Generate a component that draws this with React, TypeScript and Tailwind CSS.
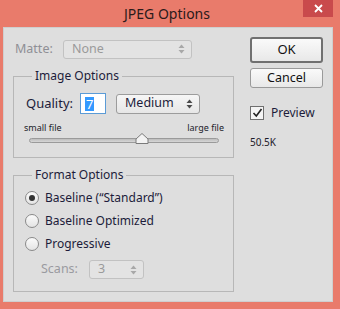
import type { ReactNode } from 'react';

const font = { fontFamily: '"Noto Sans", "Open Sans", sans-serif' };

function Arrows({ muted }: { muted?: boolean }) {
  const c = muted ? '#a8a8a8' : '#4a4a4a';
  return (
    <svg width="7" height="10" viewBox="0 0 7 10" className="shrink-0">
      <path d="M3.5 0.5 L6.5 4 L0.5 4 Z" fill={c} />
      <path d="M3.5 9.5 L6.5 6 L0.5 6 Z" fill={c} />
    </svg>
  );
}

function Select({ value, muted, className }: { value: string; muted?: boolean; className: string }) {
  return (
    <div
      className={`flex items-center justify-between rounded-[3px] border pl-[8px] pr-[6px] ${
        muted
          ? 'border-[#c2c2c2] bg-[#e3e3e3] text-[#9a9a9a]'
          : 'border-[#9c9c9c] bg-gradient-to-b from-[#f6f6f6] to-[#e6e6e6] text-[#1c1c3a]'
      } ${className}`}
    >
      <span className="text-[12.5px] leading-none">{value}</span>
      <Arrows muted={muted} />
    </div>
  );
}

function Group({ title, className, children }: { title: string; className: string; children: ReactNode }) {
  return (
    <div className={`relative border border-[#b7b7b7] ${className}`}>
      <span className="absolute left-[18px] top-[-10px] bg-[#dedede] px-[3px] text-[12px] leading-[18px] text-[#1c1c3a]">
        {title}
      </span>
      {children}
    </div>
  );
}

function Radio({ label, checked }: { label: string; checked?: boolean }) {
  return (
    <div className="flex h-[23px] items-center">
      <span className="flex h-[14px] w-[14px] items-center justify-center rounded-full border border-[#8a8a8a] bg-gradient-to-b from-[#fbfbfb] to-[#e4e4e4]">
        {checked && <span className="h-[6px] w-[6px] rounded-full bg-[#333]" />}
      </span>
      <span className="ml-[6px] text-[12px] leading-none text-[#1c1c3a]">{label}</span>
    </div>
  );
}

export default function App() {
  return (
    <div className="relative h-[309px] w-[340px] bg-[#e97b6b] pb-[7px] pl-[3px] pr-[7px]" style={font}>
      {/* title bar */}
      <div className="flex h-[27px] items-center justify-center pr-[2px] text-[14px] text-[#2b1a1a]">JPEG Options</div>
      <div className="absolute right-[7px] top-0 flex h-[17px] w-[30px] items-center justify-center bg-[#c94a4c]">
        <svg width="9" height="9" viewBox="0 0 9 9">
          <path d="M1 1 L8 8 M8 1 L1 8" stroke="#fff" strokeWidth="1.8" />
        </svg>
      </div>

      {/* client area */}
      <div className="flex h-[275px] w-[330px] border border-[#cfcfcf] bg-[#dedede] pl-[9px] pt-[9px]">
        {/* left column */}
        <div className="w-[221px] pt-[3px]">
          <div className="flex h-[18px] items-center">
            <span className="ml-[2px] w-[48px] text-[12.5px] leading-none text-[#8f8f95]">Matte:</span>
            <Select value="None" muted className="h-[19px] w-[129px]" />
          </div>

          <Group title="Image Options" className="mt-[18px] h-[82px]">
            <div className="ml-[12px] mt-[16px] flex h-[21px] items-center">
              <span className="w-[54px] text-[13px] leading-none text-[#1c1c3a]">Quality:</span>
              <div className="flex h-[21px] w-[26px] items-center border border-[#5b9bd6] bg-white pl-[4px]">
                <span className="bg-[#3399ff] px-[1px] text-[13px] leading-[14px] text-white">7</span>
              </div>
              <Select value="Medium" className="ml-[10px] h-[20px] w-[84px]" />
            </div>
            <div className="ml-[10px] mr-[9px] mt-[9px] flex justify-between text-[9px] leading-none text-[#1c1c2a]">
              <span>small file</span>
              <span>large file</span>
            </div>
            <div className="relative ml-[15px] mr-[14px] mt-[6px] h-[5px] rounded-full border border-[#9a9a9a] bg-gradient-to-b from-[#bdbdbd] to-[#d6d6d6]">
              <svg width="14" height="11" viewBox="0 0 14 11" className="absolute left-[105px] top-[-6px]">
                <path d="M7 0.5 L13 6 L13 10.5 L1 10.5 L1 6 Z" fill="#f3f3f3" stroke="#7a7a7a" />
              </svg>
            </div>
          </Group>

          <Group title="Format Options" className="mt-[17px] h-[117px]">
            <div className="ml-[11px] mt-[10px]">
              <Radio label={'Baseline (\u201CStandard\u201D)'} checked />
              <Radio label="Baseline Optimized" />
              <Radio label="Progressive" />
            </div>
            <div className="ml-[27px] mt-[5px] flex h-[19px] items-center">
              <span className="w-[48px] text-[12.5px] leading-none text-[#9a9aa0]">Scans:</span>
              <Select value="3" muted className="h-[19px] w-[55px]" />
            </div>
          </Group>
        </div>

        {/* right column */}
        <div className="ml-[16px] flex w-[73px] flex-col">
          <button className="h-[26px] rounded-[3px] border-2 border-[#707070] bg-gradient-to-b from-[#fafafa] to-[#e8e8e8] text-[13px] text-[#111]">
            OK
          </button>
          <button className="mt-[5px] h-[20px] rounded-[3px] border border-[#9a9a9a] bg-gradient-to-b from-[#fafafa] to-[#e8e8e8] text-[12.5px] leading-none text-[#111]">
            Cancel
          </button>
          <div className="mt-[18px] flex items-center">
            <span className="flex h-[14px] w-[14px] items-center justify-center border border-[#6f6f6f] bg-[#f4f4f4]">
              <svg width="11" height="10" viewBox="0 0 11 10">
                <path d="M1.5 5 L4.3 8 L9.5 1" fill="none" stroke="#222" strokeWidth="1.6" />
              </svg>
            </span>
            <span className="ml-[7px] text-[12px] leading-none text-[#1c1c3a]">Preview</span>
          </div>
          <span className="mt-[17px] text-[10px] leading-none text-[#1c1c2a]">50.5K</span>
        </div>
      </div>
    </div>
  );
}
